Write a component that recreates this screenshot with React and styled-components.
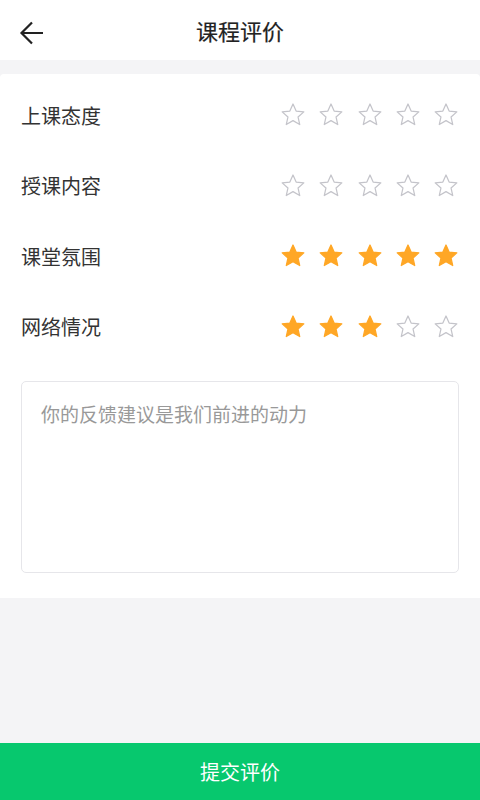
import React, {useState} from 'react';
import styled, {createGlobalStyle} from 'styled-components';

const GlobalStyle = createGlobalStyle`
    html, body {
        margin: 0;
        padding: 0;
        background: #f4f4f6;
        font-family: "Noto Sans CJK SC", "Noto Sans", sans-serif;
    }
    * {
        box-sizing: border-box;
    }
`;

const Page = styled.div`
    width: 480px;
    height: 800px;
    display: flex;
    flex-direction: column;
    background: #f4f4f6;
`;

const Header = styled.header`
    height: 60px;
    background: #fff;
    display: flex;
    align-items: center;
    justify-content: center;
    position: relative;
`;

const BackButton = styled.button`
    position: absolute;
    left: 14px;
    top: 17px;
    width: 36px;
    height: 32px;
    border: 0;
    padding: 0;
    background: none;
    display: flex;
    align-items: center;
    justify-content: center;
`;

const Title = styled.h1`
    margin: 0;
    font-size: 22px;
    font-weight: 400;
    color: #222;
    -webkit-text-stroke: 0.2px #222;
`;

const Card = styled.section`
    margin-top: 14px;
    background: #fff;
    border-radius: 4px 4px 0 0;
    padding: 6px 21px 25px;
`;

const Row = styled.div`
    height: 70.5px;
    display: flex;
    align-items: center;
    justify-content: space-between;
`;

const Label = styled.span`
    font-size: 20px;
    color: #333;
`;

const Stars = styled.div`
    display: flex;
    gap: 12.25px;
`;

const StarButton = styled.button`
    border: 0;
    padding: 0;
    background: none;
    width: 26px;
    height: 26px;
    display: flex;
`;

const Feedback = styled.textarea`
    display: block;
    width: 100%;
    height: 192px;
    margin-top: 19px;
    border: 1.5px solid #e6e6ea;
    border-radius: 5px;
    padding: 18px 19px;
    resize: none;
    font-family: inherit;
    font-size: 19px;
    color: #333;
    outline: none;
    &::placeholder {
        color: #999;
    }
`;

const Spacer = styled.div`
    flex: 1;
`;

const Submit = styled.button`
    height: 57px;
    border: 0;
    background: #07c86e;
    color: #fff;
    font-family: inherit;
    font-size: 20px;
`;

const Star = ({filled}) => (
    <svg width="26" height="26" viewBox="0 0 24 24">
        <path
            d="M12 1.8l2.9 6.6 7.1.7-5.35 4.73 1.56 6.97L12 17.2l-6.21 3.6 1.56-6.97L2 9.1l7.1-.7z"
            fill={filled ? '#ffa726' : 'none'}
            stroke={filled ? '#ffa726' : '#c4c4ca'}
            strokeWidth="1.15"
            strokeLinejoin="round"
        />
    </svg>
);

const items = [
    {key: 'attitude', label: '上课态度', score: 0},
    {key: 'content', label: '授课内容', score: 0},
    {key: 'atmosphere', label: '课堂氛围', score: 5},
    {key: 'network', label: '网络情况', score: 3},
];

export default function App() {
    const [scores, setScores] = useState(
        Object.fromEntries(items.map(i => [i.key, i.score]))
    );

    return (
        <Page>
            <GlobalStyle />
            <Header>
                <BackButton aria-label="返回">
                    <svg width="26" height="26" viewBox="0 0 26 26">
                        <path
                            d="M24 13H3M13 2.5L2.5 13 13 23.5"
                            fill="none"
                            stroke="#222"
                            strokeWidth="2.2"
                        />
                    </svg>
                </BackButton>
                <Title>课程评价</Title>
            </Header>
            <Card>
                {items.map(item => (
                    <Row key={item.key}>
                        <Label>{item.label}</Label>
                        <Stars>
                            {[1, 2, 3, 4, 5].map(n => (
                                <StarButton
                                    key={n}
                                    onClick={() =>
                                        setScores({...scores, [item.key]: n})
                                    }
                                >
                                    <Star filled={n <= scores[item.key]} />
                                </StarButton>
                            ))}
                        </Stars>
                    </Row>
                ))}
                <Feedback placeholder="你的反馈建议是我们前进的动力" />
            </Card>
            <Spacer />
            <Submit>提交评价</Submit>
        </Page>
    );
}
